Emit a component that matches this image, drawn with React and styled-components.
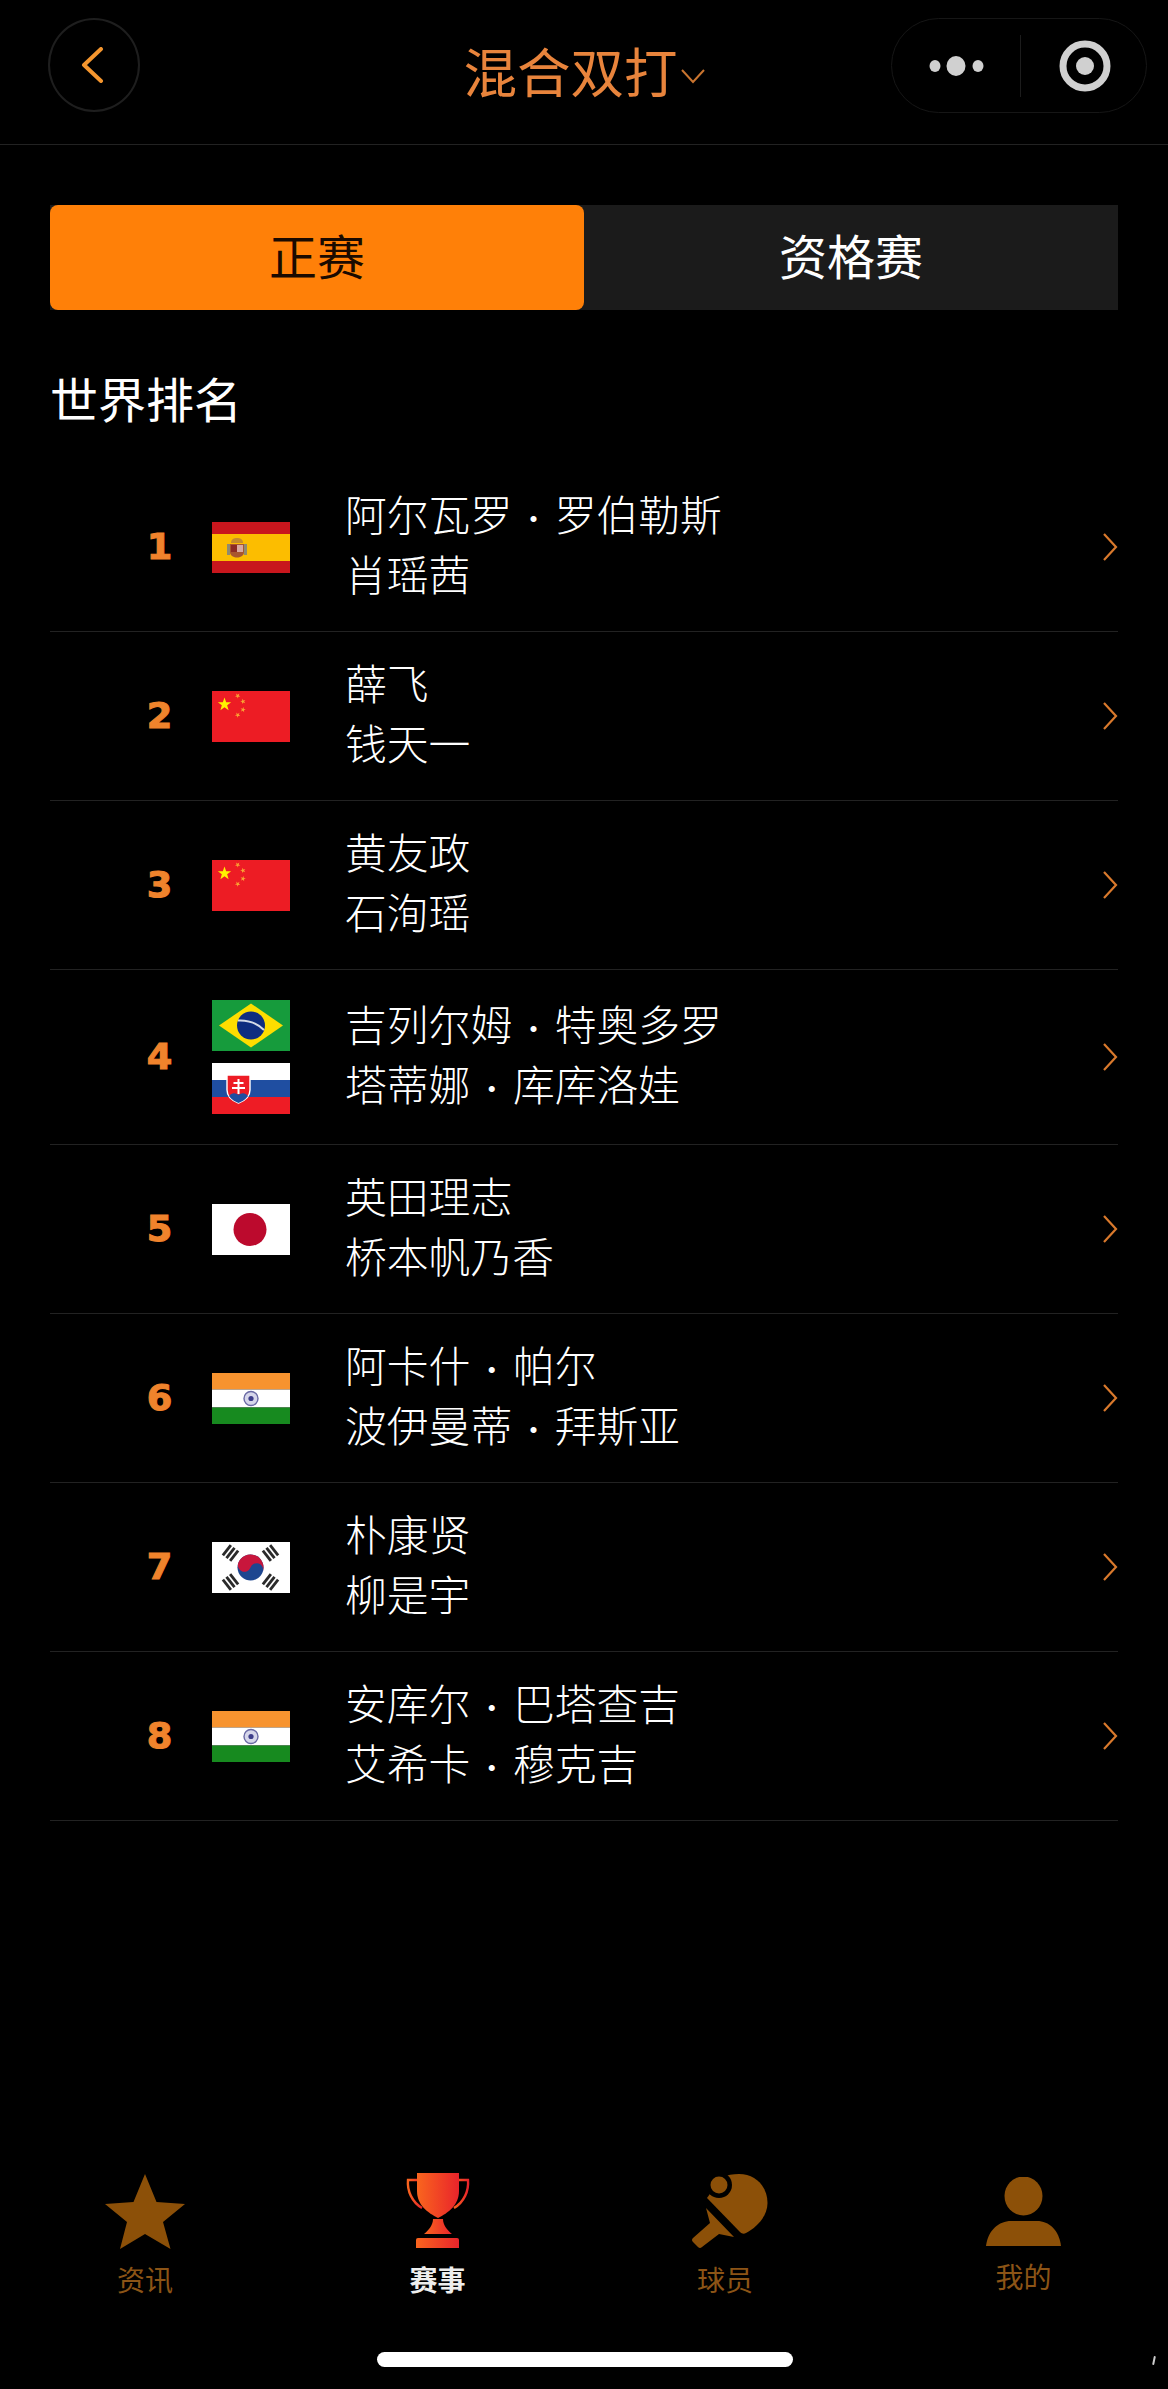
import styled, { createGlobalStyle } from "styled-components";

const GlobalStyle = createGlobalStyle`
	html, body {
		margin: 0;
		padding: 0;
		background: #000;
	}
	body {
		font-family: "Noto Sans CJK SC", "Noto Sans", sans-serif;
		overflow: hidden;
	}
	* {
		box-sizing: border-box;
	}
`;

const players = [
	{ rank: 1, flags: ["es"], names: [["阿尔瓦罗", "罗伯勒斯"], ["肖瑶茜"]] },
	{ rank: 2, flags: ["cn"], names: [["薛飞"], ["钱天一"]] },
	{ rank: 3, flags: ["cn"], names: [["黄友政"], ["石洵瑶"]] },
	{ rank: 4, flags: ["br", "sk"], names: [["吉列尔姆", "特奥多罗"], ["塔蒂娜", "库库洛娃"]] },
	{ rank: 5, flags: ["jp"], names: [["英田理志"], ["桥本帆乃香"]] },
	{ rank: 6, flags: ["in"], names: [["阿卡什", "帕尔"], ["波伊曼蒂", "拜斯亚"]] },
	{ rank: 7, flags: ["kr"], names: [["朴康贤"], ["柳是宇"]] },
	{ rank: 8, flags: ["in"], names: [["安库尔", "巴塔查吉"], ["艾希卡", "穆克吉"]] },
];

const starPoints = (cx, cy, r, turn = 0) => {
	const pts = [];
	for (let i = 0; i < 10; i++) {
		const rad = i % 2 === 0 ? r : r * 0.4;
		const a = -Math.PI / 2 + turn + (i * Math.PI) / 5;
		pts.push(`${(cx + rad * Math.cos(a)).toFixed(2)},${(cy + rad * Math.sin(a)).toFixed(2)}`);
	}
	return pts.join(" ");
};

const Trigram = ({ x, y, angle }) => (
	<g transform={`translate(${x} ${y}) rotate(${angle})`} fill="#2a2a2a">
		<rect x="-6.5" y="-6" width="13" height="2.8" />
		<rect x="-6.5" y="-1.4" width="13" height="2.8" />
		<rect x="-6.5" y="3.2" width="13" height="2.8" />
	</g>
);

const flagArt = {
	es: (
		<>
			<rect width="78" height="51" fill="#c8161d" />
			<rect y="12" width="78" height="27" fill="#fcbd00" />
			<rect x="15" y="22" width="3" height="11" fill="#8f8a70" />
			<rect x="32" y="22" width="3" height="11" fill="#8f8a70" />
			<path d="M18 22 H32 V30 C32 34 28 35.5 25 35.5 C22 35.5 18 34 18 30 Z" fill="#a8552f" />
			<rect x="25" y="23" width="6" height="7" fill="#d9a9a0" />
			<rect x="19" y="23" width="6" height="7" fill="#8c2a24" />
			<path d="M19 21 C19 17 22 16 25 16 C28 16 31 17 31 21 Z" fill="#c58b2e" />
		</>
	),
	cn: (
		<>
			<rect width="78" height="51" fill="#ed1c24" />
			<polygon points={starPoints(12.5, 13.5, 7)} fill="#fff200" />
			<polygon points={starPoints(25.7, 4.8, 2.8, 0.6)} fill="#f9a233" />
			<polygon points={starPoints(31, 10.5, 2.8, 1)} fill="#f9a233" />
			<polygon points={starPoints(31, 18.7, 2.8, 0.2)} fill="#f9a233" />
			<polygon points={starPoints(25.7, 24, 2.8, 0.7)} fill="#f9a233" />
		</>
	),
	br: (
		<>
			<rect width="78" height="51" fill="#169b3c" />
			<polygon points="39,3.5 71,25.5 39,47.5 7,25.5" fill="#fedd00" />
			<circle cx="39" cy="25.5" r="14" fill="#0f2d80" />
			<path d="M26 20.5 C35 20 45 23 52 30" fill="none" stroke="#d5dbe8" strokeWidth="2" />
		</>
	),
	sk: (
		<>
			<rect width="78" height="17" fill="#fff" />
			<rect y="17" width="78" height="17" fill="#1f4ea1" />
			<rect y="34" width="78" height="17" fill="#ee1c25" />
			<path d="M15 12 H38 V27 C38 34 32 38 26.5 40 C21 38 15 34 15 27 Z" fill="#ee1c25" stroke="#fff" strokeWidth="1.4" />
			<path d="M26.5 16 V31 M21.5 20 H31.5 M20 25 H33" stroke="#fff" strokeWidth="2" />
			<path d="M17 33 C20 29 24 30 26.5 32 C29 30 33 29 36 33 C33 37 29 39 26.5 40 C24 39 20 37 17 33 Z" fill="#1f4ea1" />
		</>
	),
	jp: (
		<>
			<rect width="78" height="51" fill="#fff" />
			<circle cx="38" cy="25.5" r="16.5" fill="#bc0a2d" />
		</>
	),
	in: (
		<>
			<rect width="78" height="16.5" fill="#f7932f" />
			<rect y="16.5" width="78" height="18" fill="#fff" />
			<rect y="34.5" width="78" height="16.5" fill="#178a1f" />
			<circle cx="39" cy="25.5" r="7" fill="#d6d6ea" stroke="#6a6aa5" strokeWidth="1.4" />
			<circle cx="39" cy="25.5" r="2.6" fill="#3d3d8a" />
		</>
	),
	kr: (
		<>
			<rect width="78" height="51" fill="#fff" />
			<g transform="translate(38.5 25.5) rotate(20)">
				<circle r="13" fill="#1d4690" />
				<path d="M-13 0 A13 13 0 0 1 13 0 A6.5 6.5 0 0 0 0 0 A6.5 6.5 0 0 1 -13 0 Z" fill="#c8163c" />
			</g>
			<Trigram x={18.5} y={11} angle={-52} />
			<Trigram x={58.5} y={11} angle={52} />
			<Trigram x={18.5} y={40} angle={52} />
			<Trigram x={58.5} y={40} angle={-52} />
		</>
	),
};

const Flag = ({ code }) => (
	<FlagSvg viewBox="0 0 78 51" width="78" height="51">
		{flagArt[code]}
	</FlagSvg>
);

const navItems = [
	{
		label: "资讯",
		gap: 95,
		icon: (
			<svg width="80" height="75" viewBox="0 0 80 75">
				<polygon points="40,0 51.5,28 80,30 58,48 65.5,75 40,60 15,75 22,48 0,30 28.5,28" fill="#8c5008" />
			</svg>
		),
	},
	{
		label: "赛事",
		gap: 192.5,
		active: true,
		icon: (
			<svg width="64" height="76" viewBox="0 0 64 76">
				<defs>
					<linearGradient id="cup" x1="0" x2="1" y1="0" y2="0">
						<stop offset="0" stopColor="#f9651e" />
						<stop offset="1" stopColor="#e9242b" />
					</linearGradient>
				</defs>
				<path d="M12 7 H2 C1 18 6 29 16 35" fill="none" stroke="url(#cup)" strokeWidth="2.4" />
				<path d="M52 7 H62 C63 18 58 29 48 35" fill="none" stroke="url(#cup)" strokeWidth="2.4" />
				<path d="M11 0 H53 V18 C53 32 42 40 32 45 C22 40 11 32 11 18 Z" fill="url(#cup)" />
				<path d="M27 46 H37 C37 52 41 57 46 61 H18 C23 57 27 52 27 46 Z" fill="url(#cup)" />
				<path d="M12 65 H51 Q53 65 53 67 V75 H10 V67 Q10 65 12 65 Z" fill="url(#cup)" />
			</svg>
		),
	},
	{
		label: "球员",
		gap: 187.5,
		shift: 9,
		icon: (
			<svg width="76" height="75" viewBox="0 0 76 75">
				<path d="M47 0 C64 0 75.5 13 75.5 29 C75.5 42 65 53 54 59 C52 60 50 60 48 58 L15 24 L30 3 C35 1 41 0 47 0 Z" fill="#8c5008" />
				<circle cx="27" cy="11" r="13" fill="#000" />
				<circle cx="27" cy="11" r="8.5" fill="#8c5008" />
				<path d="M14 34 L42 63 L27 60 L10 73 Q8 75 6 73 L1 68 Q-1 66 1 64 L18 49 Z" fill="#8c5008" />
			</svg>
		),
	},
	{
		label: "我的",
		gap: 198.5,
		iconBox: 73,
		icon: (
			<svg width="76" height="69" viewBox="0 0 76 69">
				<ellipse cx="37.5" cy="19" rx="19" ry="19.5" fill="#8c5008" />
				<path d="M0 69 C2 53 13 44 25 44 H51 C63 44 73 53 75 69 Z" fill="#8c5008" />
			</svg>
		),
	},
];

const App = () => {
	return (
		<Page>
			<GlobalStyle />
			<Header>
				<BackButton>
					<svg width="24" height="36" viewBox="0 0 24 36">
						<path d="M21 2 L4 18 L21 34" fill="none" stroke="#f5962e" strokeWidth="4" strokeLinecap="round" strokeLinejoin="round" />
					</svg>
				</BackButton>
				<TitleWrap>
					<Title>混合双打</Title>
					<svg width="24" height="16" viewBox="0 0 24 16">
						<path d="M1 2 L12 14 L23 2" fill="none" stroke="#c9742f" strokeWidth="2" />
					</svg>
				</TitleWrap>
				<Capsule>
					<svg width="56" height="22" viewBox="0 0 56 22">
						<ellipse cx="6" cy="11" rx="5.5" ry="6" fill="#d0d0d0" />
						<ellipse cx="27" cy="11" rx="9.5" ry="10" fill="#d0d0d0" />
						<ellipse cx="49" cy="11" rx="5.5" ry="6" fill="#d0d0d0" />
					</svg>
					<CapsuleLine />
					<svg width="52" height="52" viewBox="0 0 52 52">
						<circle cx="26" cy="26" r="22" fill="none" stroke="#d0d0d0" strokeWidth="7" />
						<circle cx="26" cy="26" r="9" fill="#d0d0d0" />
					</svg>
				</Capsule>
			</Header>

			<Tabs>
				<Tab $active>正赛</Tab>
				<Tab>资格赛</Tab>
			</Tabs>

			<SectionTitle>世界排名</SectionTitle>

			<List>
				{players.map((p) => (
					<Row key={p.rank}>
						<Rank>
							<RankDigit>{p.rank}</RankDigit>
						</Rank>
						<Flags>
							{p.flags.map((f) => (
								<Flag key={f} code={f} />
							))}
						</Flags>
						<Names>
							{p.names.map((parts) => (
								<NameLine key={parts[0]}>
									{parts[0]}
									{parts[1] && (
										<>
											<Dot>·</Dot>
											{parts[1]}
										</>
									)}
								</NameLine>
							))}
						</Names>
						<svg width="16" height="30" viewBox="0 0 16 30">
							<path d="M2 2 L14 15 L2 28" fill="none" stroke="#d9792c" strokeWidth="2.2" />
						</svg>
					</Row>
				))}
			</List>

			<Nav>
				{navItems.map((item) => (
					<NavItem key={item.label} $gap={item.gap}>
						<NavIcon $box={item.iconBox} $shift={item.shift}>
							{item.icon}
						</NavIcon>
						<NavLabel $active={item.active}>{item.label}</NavLabel>
					</NavItem>
				))}
			</Nav>
			<HomeBar />
			<Speck />
		</Page>
	);
};

export default App;

const Page = styled.div`
	position: relative;
	display: flex;
	flex-direction: column;
	min-height: 100vh;
	background: #000;
	color: #fff;
`;

const Header = styled.header`
	display: grid;
	grid-template-columns: 1fr auto 1fr;
	align-items: start;
	height: 145px;
	padding: 18px 21px 0;
	border-bottom: 1px solid #222;
`;

const BackButton = styled.div`
	display: flex;
	align-items: center;
	justify-content: center;
	width: 92px;
	height: 94px;
	margin-left: 27px;
	padding-right: 4px;
	border: 2px solid #1e1e1e;
	border-radius: 50%;
`;

const TitleWrap = styled.div`
	display: flex;
	align-items: flex-end;
	gap: 3px;
	padding-top: 25px;
	svg {
		margin-bottom: 13px;
	}
`;

const Title = styled.div`
	font-size: 53.5px;
	line-height: 54px;
	color: #e8843c;
`;

const Capsule = styled.div`
	justify-self: end;
	display: flex;
	align-items: center;
	width: 256px;
	height: 95px;
	padding-left: 37px;
	border: 1px solid #161616;
	border-radius: 48px;
`;

const CapsuleLine = styled.div`
	width: 1px;
	height: 62px;
	margin: 0 38px 0 35px;
	background: #1c1c1c;
`;

const Tabs = styled.div`
	display: flex;
	height: 105px;
	margin: 60px 50px 0;
	background: #1b1b1b;
`;

const Tab = styled.div`
	flex: 1;
	display: flex;
	align-items: center;
	justify-content: center;
	padding-bottom: 8px;
	border-radius: 8px;
	font-size: 48px;
	background: ${(p) => (p.$active ? "#ff8008" : "transparent")};
	color: ${(p) => (p.$active ? "#1a0a00" : "#fff")};
`;

const SectionTitle = styled.h2`
	height: 58px;
	margin: 60px 50px 35px;
	font-size: 48px;
	line-height: 55px;
	font-weight: 400;
`;

const List = styled.div`
	margin: 0 50px;
`;

const Row = styled.div`
	display: flex;
	align-items: center;
	padding: 24px 0;
	border-bottom: 1px solid #222;
`;

const Rank = styled.div`
	width: 122px;
	margin-right: 40px;
	text-align: right;
	font-family: "DejaVu Sans", sans-serif;
	font-size: 35px;
	font-weight: 700;
	color: #f0832c;
`;

const RankDigit = styled.span`
	display: inline-block;
	transform: scaleX(1.05);
	transform-origin: right center;
	-webkit-text-stroke: 1px #f0832c;
`;

const Flags = styled.div`
	display: flex;
	flex-direction: column;
	gap: 12px;
	width: 78px;
	padding: 6px 0;
`;

const FlagSvg = styled.svg`
	display: block;
`;

const Names = styled.div`
	flex: 1;
	margin-left: 55px;
	font-size: 41.8px;
	font-weight: 300;
`;

const NameLine = styled.div`
	height: 60px;
	line-height: 53px;
	white-space: nowrap;
`;

const Dot = styled.span`
	display: inline-block;
	width: 42.5px;
	text-align: center;
	font-size: 32px;
`;

const Nav = styled.nav`
	display: flex;
	margin-top: auto;
`;

const NavItem = styled.div`
	display: flex;
	flex-direction: column;
	align-items: center;
	width: 100px;
	margin-left: ${(p) => p.$gap}px;
`;

const NavIcon = styled.div`
	display: flex;
	align-items: flex-end;
	justify-content: center;
	height: ${(p) => p.$box || 76}px;
	padding-left: ${(p) => p.$shift || 0}px;
`;

const NavLabel = styled.div`
	margin-top: 16px;
	font-size: 28px;
	line-height: 28px;
	font-weight: ${(p) => (p.$active ? 700 : 400)};
	color: ${(p) => (p.$active ? "#eee" : "#8c5416")};
`;

const HomeBar = styled.div`
	align-self: flex-start;
	width: 416px;
	height: 15px;
	margin: 59px 0 22px 377px;
	border-radius: 8px;
	background: #fff;
`;

const Speck = styled.div`
	position: absolute;
	right: 13px;
	bottom: 24px;
	width: 2px;
	height: 9px;
	border-radius: 1px;
	background: #ccc;
	transform: rotate(12deg);
`;
